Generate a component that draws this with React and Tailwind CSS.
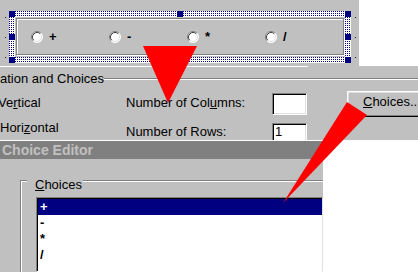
import React from "react";

const Radio = () => (
  <svg width="12" height="12" viewBox="0 0 12 12" className="shrink-0">
    <circle cx="6" cy="6" r="5.5" fill="#fff" />
    <path d="M2.11 9.89A5.5 5.5 0 0 1 9.89 2.11" fill="none" stroke="#808080" strokeWidth="1" />
    <path d="M9.89 2.11A5.5 5.5 0 0 1 2.11 9.89" fill="none" stroke="#fff" strokeWidth="1" />
    <path d="M2.82 9.18A4.5 4.5 0 0 1 9.18 2.82" fill="none" stroke="#404040" strokeWidth="1" />
    <path d="M9.18 2.82A4.5 4.5 0 0 1 2.82 9.18" fill="none" stroke="#dfdfdf" strokeWidth="1" />
  </svg>
);

const ops = ["+", "-", "*", "/"];

const Handle = ({ className }) => <div className={`absolute w-[6px] h-[6px] bg-[#000080] ${className}`} />;
const Dot = ({ className }) => <div className={`absolute w-px h-px bg-[#202020] ${className}`} />;

const FormDesigner = () => (
  <div className="relative w-[359px] shrink-0 pl-[9px] pt-[11px]">
    <div className="relative w-[342px] h-[52px] p-[6px] bg-[conic-gradient(at_1px_1px,#fff_0_75%,#000080_0)] bg-[length:2px_2px]">
      <div className="h-full bg-[#c0c0c0] pl-px pt-px pr-[2px] pb-[2px] flex">
        <div className="flex-1 flex items-center pl-[14px] border border-[#808080] shadow-[1px_1px_0_#fff,inset_1px_1px_0_#fff]">
          {ops.map((op) => (
            <div key={op} className="w-[78px] shrink-0 flex items-center">
              <Radio />
              <span className="ml-[6px] font-bold text-[13px] leading-[16px]">{op}</span>
            </div>
          ))}
        </div>
      </div>
      <Handle className="left-0 top-0" />
      <Handle className="left-[168px] top-0" />
      <Handle className="right-0 top-0" />
      <Handle className="left-0 top-[23px]" />
      <Handle className="right-0 top-[23px]" />
      <Handle className="left-0 bottom-0" />
      <Handle className="left-[168px] bottom-0" />
      <Handle className="right-0 bottom-0" />
    </div>
    <Dot className="left-[5px] top-[17px]" />
    <Dot className="left-[5px] top-[37px]" />
    <Dot className="left-[5px] top-[57px]" />
    <Dot className="left-[355px] top-[17px]" />
    <Dot className="left-[355px] top-[37px]" />
    <Dot className="left-[355px] top-[57px]" />
  </div>
);

const sunken =
  "bg-white border border-t-[#808080] border-l-[#808080] border-b-white border-r-white shadow-[inset_1px_1px_0_#000,inset_-1px_-1px_0_#dfdfdf]";

const Properties = () => (
  <div className="h-[74px] overflow-hidden leading-[16px]">
    <div className="w-[308px] h-px bg-white" />
    <div className="flex items-center h-[16px] mt-[4px]">
      <span className="whitespace-nowrap">ation and Choices</span>
      <div className="flex-1 h-[2px] border-t border-b border-t-[#808080] border-b-white" />
    </div>
    <div className="flex mt-[3px]">
      <div className="w-[126px] shrink-0 flex flex-col whitespace-nowrap">
        <span className="mt-[5px] -ml-[2px]">
          Ve<u>r</u>tical
        </span>
        <span className="mt-[9px]">
          Hori<u>z</u>ontal
        </span>
      </div>
      <div className="w-[146px] shrink-0 flex flex-col whitespace-nowrap">
        <span className="mt-[5px]">
          Number of Col<u>u</u>mns:
        </span>
        <span className="mt-[13px]">Number of Rows:</span>
      </div>
      <div className="w-[75px] shrink-0 flex flex-col">
        <div className={`w-[35px] h-[22px] mt-[3px] ${sunken}`} />
        <div className={`w-[35px] h-[22px] mt-[8px] pl-[2px] ${sunken}`}>1</div>
      </div>
      <div className="flex-1 min-w-0">
        <div className="w-[90px] h-[26px] mt-[1px] pl-[15px] pt-[2px] whitespace-nowrap border border-t-white border-l-white border-r-black border-b-black shadow-[inset_-1px_-1px_0_#808080,inset_1px_1px_0_#dfdfdf]">
          <u>C</u>hoices...
        </div>
      </div>
    </div>
  </div>
);

const ChoiceEditor = () => (
  <div className="w-[323px] shrink-0 flex flex-col">
    <div className="h-px bg-white" />
    <div className="h-[18px] bg-[#808080] pl-[2px] text-[14px] font-bold leading-[18px] text-[#c0c0c0]">
      Choice Editor
    </div>
    <div className="flex-1 bg-[#c0c0c0] pt-[21px] pl-[20px] flex flex-col">
      <div className="relative flex-1 flex flex-col border-t border-l border-[#808080] shadow-[inset_1px_1px_0_#fff] pl-[15px] pt-[16px]">
        <span className="absolute left-[6px] -top-[4px] bg-[#c0c0c0] pl-[8px] pr-px leading-[16px]">
          <u>C</u>hoices
        </span>
        <div className="flex-1 bg-white border border-t-[#808080] border-l-[#808080] border-r-[#dfdfdf] border-b-white shadow-[inset_1px_1px_0_#000] pt-px pl-px">
          {ops.map((op, i) => (
            <div
              key={op}
              className={`h-[16px] leading-[16px] pl-[2px] font-bold ${i === 0 ? "bg-[#000080] text-white" : "text-black"}`}
            >
              {op}
            </div>
          ))}
        </div>
      </div>
    </div>
  </div>
);

const Arrows = () => (
  <svg className="absolute inset-0 pointer-events-none" width="418" height="272">
    <polygon points="143,46 197,46 168,103" fill="#ff0000" />
    <polygon points="347,102 367,115 283,203" fill="#ff0000" />
  </svg>
);

export default function App() {
  return (
    <div className="relative w-[418px] h-[272px] overflow-hidden bg-[#c0c0c0] font-['Liberation_Sans',Arial,sans-serif] text-[13px] text-black">
      <div className="flex h-[66px]">
        <FormDesigner />
        <div className="flex-1 bg-white" />
      </div>
      <Properties />
      <div className="flex h-[132px]">
        <ChoiceEditor />
        <div className="flex-1 bg-white" />
      </div>
      <Arrows />
    </div>
  );
}
